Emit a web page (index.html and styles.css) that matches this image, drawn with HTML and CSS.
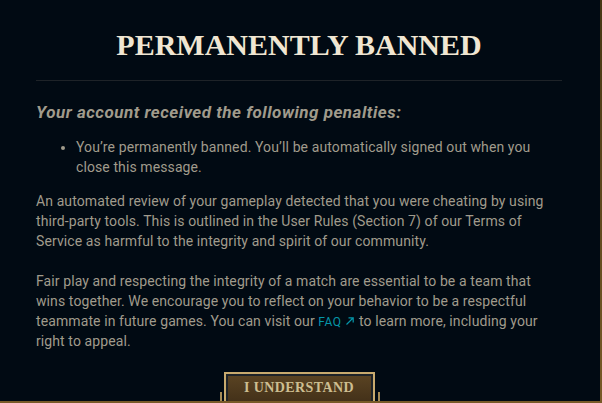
FILE: index.html
```html
<!DOCTYPE html>
<html lang="en">
<head>
    <meta charset="UTF-8">
    <meta name="viewport" content="width=device-width, initial-scale=1.0">
    <title>Permanently Banned</title>
    <link rel="stylesheet" href="styles.css">
</head>
<body>

    <div class="modal">
        <h1 class="modal-title">Permanently Banned</h1>
        <div class="divider"></div>

        <h2 class="penalty-title">Your account received the following penalties:</h2>
        <ul class="penalty-list">
            <li>You’re permanently banned. You’ll be automatically signed out when you close this message.</li>
        </ul>

        <p>An automated review of your gameplay detected that you were cheating by using third-party tools. This is outlined in the User Rules (Section 7) of our Terms of Service as harmful to the integrity and spirit of our community.</p>

        <p>Fair play and respecting the integrity of a match are essential to be a team that wins together. We encourage you to reflect on your behavior to be a respectful teammate in future games. You can visit our <a class="faq" href="#">FAQ<svg width="10" height="10" viewBox="0 0 10 10"><path d="M1.5 8.5 L8 2 M3.5 1.8 H8.2 V6.5" fill="none" stroke="currentColor" stroke-width="1.2"/></svg></a> to learn more, including your right to appeal.</p>

        <div class="actions">
            <button class="btn-understand">I Understand</button>
        </div>
    </div>

</body>
</html>
```

FILE: styles.css
```css
body {
    margin: 0;
    background: #010a13;
}
.modal {
    box-sizing: border-box;
    width: 602px;
    height: 403px;
    padding: 28px 38px 0 36px;
    background: #010a13;
    border-right: 2px solid #785a28;
    border-bottom: 2px solid #785a28;
    border-image: linear-gradient(to bottom, #463714, #785a28) 1;
    overflow: hidden;
    font-family: Roboto, "Liberation Sans", sans-serif;
    font-size: 14px;
    line-height: 20px;
    letter-spacing: 0.1px;
    color: #a09b8c;
}
.modal-title {
    margin: 0;
    font-family: "Liberation Serif", serif;
    font-size: 30px;
    line-height: 34px;
    font-weight: bold;
    letter-spacing: 0;
    text-transform: uppercase;
    text-align: center;
    color: #f0e6d2;
}
.divider {
    height: 1px;
    margin-top: 18px;
    background: #1e2328;
}
.penalty-title {
    margin: 21px 0 0;
    font-size: 17px;
    line-height: 20px;
    font-weight: bold;
    font-style: italic;
    letter-spacing: 0.5px;
    color: #a09b8c;
}
.penalty-list {
    margin: 15px 0 14px;
    padding-left: 40px;
}
p {
    margin: 0 0 20px;
}
.faq {
    color: #0596aa;
    text-decoration: none;
    font-size: 12px;
    line-height: 14px;
    letter-spacing: 0.5px;
}
.faq svg {
    margin-left: 4px;
    vertical-align: 0;
}
.actions {
    display: flex;
    justify-content: center;
    margin-top: 21px;
}
.btn-understand {
    position: relative;
    width: 151px;
    height: 40px;
    padding: 5px 0 0;
    border: 2px solid #c8aa6e;
    box-shadow: inset 0 0 0 2px #1e2328;
    background: linear-gradient(to bottom, #5b4423, #3c2b16);
    font-family: "Liberation Serif", serif;
    font-size: 14px;
    line-height: 18px;
    font-weight: bold;
    letter-spacing: 0.4px;
    text-transform: uppercase;
    color: #cdbe91;
    display: flex;
    justify-content: center;
    align-items: flex-start;
}
.btn-understand::before,
.btn-understand::after {
    content: "";
    position: absolute;
    top: 18px;
    width: 2px;
    height: 12px;
    background: #a48a56;
}
.btn-understand::before {
    left: -6px;
}
.btn-understand::after {
    right: -7px;
}
```
